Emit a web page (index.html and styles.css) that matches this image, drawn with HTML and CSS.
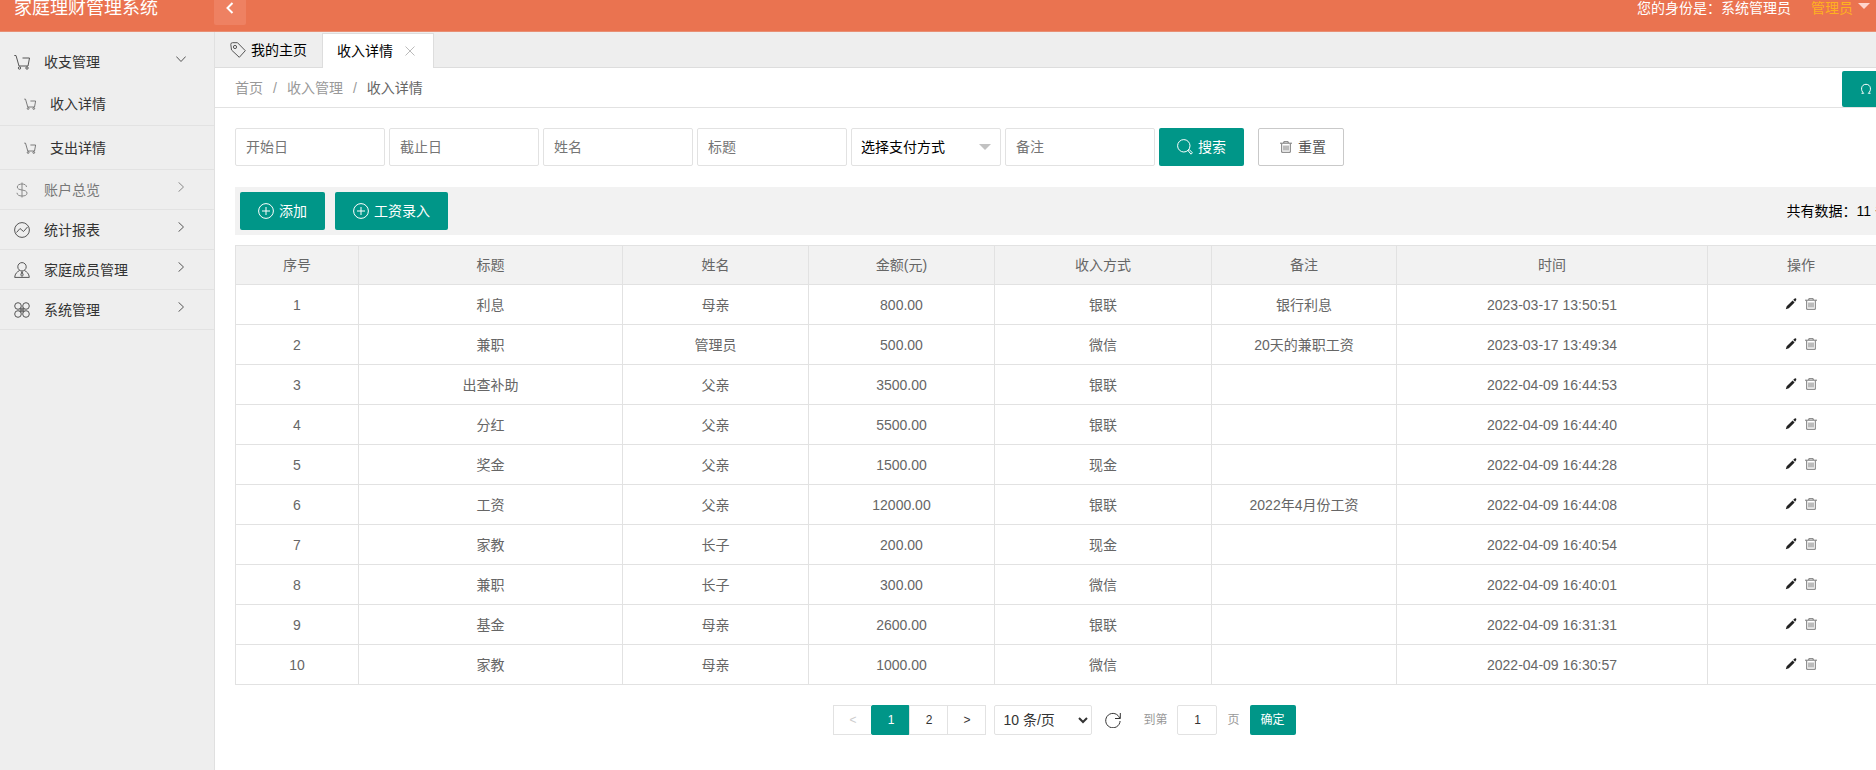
FILE: index.html
```html
<!DOCTYPE html>
<html lang="zh-CN">
<head>
  <meta charset="UTF-8">
  <meta name="viewport" content="width=device-width, initial-scale=1.0">
  <title>家庭理财管理系统</title>
  <link rel="stylesheet" href="styles.css">
</head>
<body>
  <svg class="sprite" aria-hidden="true">
    <symbol id="i-cart" viewBox="0 0 16 16"><path d="M.3 1.500h1.700l3 10.500h9l1.500-8H8.500"/><circle cx="5.500" cy="14" r="1.200"/><circle cx="13" cy="14" r="1.200"/></symbol>
    <symbol id="i-dollar" viewBox="0 0 16 16"><path d="M8 .5v15M12.500 5c0-1.800-1.800-3-4.500-3S3.300 3.200 3.300 5 5 7.500 8 8s5 1.200 5 3.200S11 14 8 14s-5-1.200-5-3.200"/></symbol>
    <symbol id="i-chart" viewBox="0 0 16 16"><circle cx="8" cy="8" r="7.400"/><path d="M2.500 10.500l3.500-4 3.500 3 4-4.500"/></symbol>
    <symbol id="i-user" viewBox="0 0 16 16"><circle cx="8" cy="4.800" r="4.200"/><path d="M5.500 8.500C3 10 1 11.500.700 15.400h14.600C15 11.500 13 10 10.500 8.500M8 9.500l-1.200 3.500L8 14.500 9.200 13z"/></symbol>
    <symbol id="i-clover" viewBox="0 0 16 16"><circle cx="4" cy="4" r="3.300"/><circle cx="12" cy="4" r="3.300"/><circle cx="4" cy="12" r="3.300"/><circle cx="12" cy="12" r="3.300"/><path d="M5.500 7h5M5.500 9h5M7 5.500v5M9 5.500v5"/></symbol>
    <symbol id="i-tag" viewBox="0 0 16 16"><path d="M.8 2.500Q.8.700 2.500.700h5l7.800 8-6 6.600L1.500 8z"/><circle cx="5" cy="5" r="1.600"/></symbol>
    <symbol id="i-plus" viewBox="0 0 16 16"><circle cx="8" cy="8" r="7.400"/><path d="M8 4v8M4 8h8"/></symbol>
    <symbol id="i-search" viewBox="0 0 16 16"><circle cx="6.800" cy="6.800" r="6.200"/><path d="M11 11.500l1.200-1 3.200 3.300-1.400 1.400z"/></symbol>
    <symbol id="i-trash" viewBox="0 0 12 12"><path d="M0 2.200h12M3.800 2V.7h4.400V2M1.700 2.500v8.800h8.600V2.500M4 4.500v5M6 4.500v5M8 4.500v5"/></symbol>
    <symbol id="i-edit" viewBox="0 0 12 12"><path class="solid" d="M.8 11.300l.9-3L7.600 2.400l2 2L3.800 10.300zM8.200 1.800L9.700.500q.7-.4 1.300.1t.2 1.300L10.100 3.700z"/></symbol>
    <symbol id="i-refresh" viewBox="0 0 16 16"><path d="M14.800 6.500A7.200 7.200 0 1 0 15.100 9M15.300 1v5.500H10"/></symbol>
    <symbol id="i-close" viewBox="0 0 10 10"><path d="M.5.500l9 9M9.500.500l-9 9"/></symbol>
    <symbol id="i-right" viewBox="0 0 10 10"><path d="M2.500.300L7.500 5l-5 4.700"/></symbol>
    <symbol id="i-down" viewBox="0 0 10 10"><path d="M.300 2.500L5 7.500l4.700-5"/></symbol>
    <symbol id="i-left" viewBox="0 0 12 12"><path d="M8.500 1L3.500 6l5 5"/></symbol>
    <symbol id="i-reload" viewBox="0 0 12 12"><path d="M1.500 10.300h2.200C.2 7.500 1 1.300 6 1.300s5.800 6.200 2.300 9h2.200"/></symbol>
  </svg>

  <div class="app">
    <header class="topbar">
      <a class="logo" href="#">家庭理财管理系统</a>
      <button class="fold" type="button" aria-label="折叠菜单"><svg><use href="#i-left"/></svg></button>
      <span class="role">您的身份是：系统管理员</span>
      <a class="account" href="#">管理员 <i class="caret"></i></a>
    </header>

    <div class="body">
      <nav class="side">
        <a class="item" href="#"><svg><use href="#i-cart"/></svg>收支管理<svg class="arrow"><use href="#i-down"/></svg></a>
        <a class="item sub" href="#"><svg><use href="#i-cart"/></svg>收入详情</a>
        <a class="item sub" href="#"><svg><use href="#i-cart"/></svg>支出详情</a>
        <a class="item muted" href="#"><svg><use href="#i-dollar"/></svg>账户总览<svg class="arrow"><use href="#i-right"/></svg></a>
        <a class="item" href="#"><svg><use href="#i-chart"/></svg>统计报表<svg class="arrow"><use href="#i-right"/></svg></a>
        <a class="item" href="#"><svg><use href="#i-user"/></svg>家庭成员管理<svg class="arrow"><use href="#i-right"/></svg></a>
        <a class="item" href="#"><svg><use href="#i-clover"/></svg>系统管理<svg class="arrow"><use href="#i-right"/></svg></a>
      </nav>

      <main class="main">
        <div class="tabs">
          <a class="tab" href="#"><svg><use href="#i-tag"/></svg>我的主页</a>
          <a class="tab active" href="#">收入详情<svg class="close"><use href="#i-close"/></svg></a>
        </div>

        <div class="crumbs">
          <a href="#">首页</a><span>/</span><a href="#">收入管理</a><span>/</span><a class="current" href="#">收入详情</a>
          <button class="btn reload" type="button" aria-label="刷新"><svg><use href="#i-reload"/></svg></button>
        </div>

        <div class="content">
          <form class="search">
            <input type="text" placeholder="开始日" aria-label="开始日">
            <input type="text" placeholder="截止日" aria-label="截止日">
            <input type="text" placeholder="姓名" aria-label="姓名">
            <input type="text" placeholder="标题" aria-label="标题">
            <div class="select">
              <select aria-label="支付方式"><option>选择支付方式</option><option>银联</option><option>微信</option><option>现金</option></select>
            </div>
            <input type="text" placeholder="备注" aria-label="备注">
            <button class="btn" type="button"><svg><use href="#i-search"/></svg>搜索</button>
            <button class="btn plain" type="reset"><svg><use href="#i-trash"/></svg>重置</button>
          </form>

          <div class="toolbar">
            <button class="btn" type="button"><svg><use href="#i-plus"/></svg>添加</button>
            <button class="btn" type="button"><svg><use href="#i-plus"/></svg>工资录入</button>
            <span class="total">共有数据：11 条</span>
          </div>

          <table class="list">
            <colgroup>
              <col class="c-no"><col class="c-title"><col class="c-name"><col class="c-name"><col class="c-type"><col class="c-note"><col class="c-time"><col class="c-act">
            </colgroup>
            <thead>
              <tr><th>序号</th><th>标题</th><th>姓名</th><th>金额(元)</th><th>收入方式</th><th>备注</th><th>时间</th><th>操作</th></tr>
            </thead>
            <tbody>
              <tr><td>1</td><td>利息</td><td>母亲</td><td>800.00</td><td>银联</td><td>银行利息</td><td>2023-03-17 13:50:51</td><td><a href="#" title="编辑"><svg><use href="#i-edit"/></svg></a><a href="#" title="删除"><svg><use href="#i-trash"/></svg></a></td></tr>
              <tr><td>2</td><td>兼职</td><td>管理员</td><td>500.00</td><td>微信</td><td>20天的兼职工资</td><td>2023-03-17 13:49:34</td><td><a href="#" title="编辑"><svg><use href="#i-edit"/></svg></a><a href="#" title="删除"><svg><use href="#i-trash"/></svg></a></td></tr>
              <tr><td>3</td><td>出查补助</td><td>父亲</td><td>3500.00</td><td>银联</td><td></td><td>2022-04-09 16:44:53</td><td><a href="#" title="编辑"><svg><use href="#i-edit"/></svg></a><a href="#" title="删除"><svg><use href="#i-trash"/></svg></a></td></tr>
              <tr><td>4</td><td>分红</td><td>父亲</td><td>5500.00</td><td>银联</td><td></td><td>2022-04-09 16:44:40</td><td><a href="#" title="编辑"><svg><use href="#i-edit"/></svg></a><a href="#" title="删除"><svg><use href="#i-trash"/></svg></a></td></tr>
              <tr><td>5</td><td>奖金</td><td>父亲</td><td>1500.00</td><td>现金</td><td></td><td>2022-04-09 16:44:28</td><td><a href="#" title="编辑"><svg><use href="#i-edit"/></svg></a><a href="#" title="删除"><svg><use href="#i-trash"/></svg></a></td></tr>
              <tr><td>6</td><td>工资</td><td>父亲</td><td>12000.00</td><td>银联</td><td>2022年4月份工资</td><td>2022-04-09 16:44:08</td><td><a href="#" title="编辑"><svg><use href="#i-edit"/></svg></a><a href="#" title="删除"><svg><use href="#i-trash"/></svg></a></td></tr>
              <tr><td>7</td><td>家教</td><td>长子</td><td>200.00</td><td>现金</td><td></td><td>2022-04-09 16:40:54</td><td><a href="#" title="编辑"><svg><use href="#i-edit"/></svg></a><a href="#" title="删除"><svg><use href="#i-trash"/></svg></a></td></tr>
              <tr><td>8</td><td>兼职</td><td>长子</td><td>300.00</td><td>微信</td><td></td><td>2022-04-09 16:40:01</td><td><a href="#" title="编辑"><svg><use href="#i-edit"/></svg></a><a href="#" title="删除"><svg><use href="#i-trash"/></svg></a></td></tr>
              <tr><td>9</td><td>基金</td><td>母亲</td><td>2600.00</td><td>银联</td><td></td><td>2022-04-09 16:31:31</td><td><a href="#" title="编辑"><svg><use href="#i-edit"/></svg></a><a href="#" title="删除"><svg><use href="#i-trash"/></svg></a></td></tr>
              <tr><td>10</td><td>家教</td><td>母亲</td><td>1000.00</td><td>微信</td><td></td><td>2022-04-09 16:30:57</td><td><a href="#" title="编辑"><svg><use href="#i-edit"/></svg></a><a href="#" title="删除"><svg><use href="#i-trash"/></svg></a></td></tr>
            </tbody>
          </table>

          <div class="pager">
            <div class="pages">
              <a class="disabled" href="#">&lt;</a><a class="on" href="#">1</a><a href="#">2</a><a href="#">&gt;</a>
            </div>
            <select aria-label="每页条数"><option>10 条/页</option><option>20 条/页</option><option>50 条/页</option></select>
            <button class="refresh" type="button" aria-label="刷新列表"><svg><use href="#i-refresh"/></svg></button>
            <label for="goto">到第</label>
            <input id="goto" type="text" value="1">
            <span>页</span>
            <button class="btn go" type="button">确定</button>
          </div>
        </div>
      </main>
    </div>
  </div>
</body>
</html>
```

FILE: styles.css
```css
* { box-sizing: border-box; }
html { overflow: hidden; }
body {
  margin: 0;
  overflow: hidden;
  background: #fff;
  color: #333;
  font: 14px/20px "Liberation Sans", "Noto Sans CJK SC", sans-serif;
}
a { color: inherit; text-decoration: none; }
input, select, button { font: inherit; margin: 0; }
svg { width: 16px; height: 16px; fill: none; stroke: currentColor; stroke-width: 1; flex: none; }
.solid { fill: currentColor; stroke: none; }
.sprite { position: absolute; width: 0; height: 0; }

/* the admin shell is wider than the window and starts above it */
.app {
  display: flex;
  flex-direction: column;
  min-height: calc(100vh + 14px);
  margin: -14px -38px 0 0;
}

.topbar {
  display: flex;
  align-items: center;
  height: 46px;
  padding: 0 44px 2px 0;
  background: #ea7350;
  border-bottom: 1px solid #e88f74;
  color: #fff;
}
.logo { width: 214px; padding-left: 14px; font-size: 18px; }
.fold {
  display: flex;
  align-items: center;
  justify-content: center;
  width: 32px;
  height: 34px;
  padding: 0;
  border: 0;
  border-radius: 2px;
  background: #ee8162;
  color: #fff;
}
.fold svg { width: 12px; height: 12px; stroke-width: 2; }
.role { margin-left: auto; }
.account { display: flex; align-items: center; margin-left: 20px; color: #ffb01f; }
.caret {
  margin: 0 0 4px 5px;
  border: 6px solid transparent;
  border-top-color: #ffd5cc;
  border-bottom-width: 0;
}

.body { display: flex; flex: 1; }
.side {
  width: 215px;
  flex: none;
  padding-top: 10px;
  background: #eee;
  border-right: 1px solid #e0e0e0;
}
.item {
  display: flex;
  align-items: center;
  height: 40px;
  padding: 0 28px 0 14px;
  border-bottom: 1px solid #e2e2e2;
}
.item svg { margin-right: 14px; color: #555; }
.item:first-child { border-bottom: 0; }
.item .arrow { width: 10px; height: 10px; margin: 0 0 6px auto; }
.item.sub { height: 44px; padding-left: 24px; }
.item.sub svg { width: 12px; height: 12px; }
.item.muted { color: #777; }
.item.muted svg { color: #888; }

.main { flex: 1; min-width: 0; }
.tabs {
  display: flex;
  align-items: flex-end;
  height: 36px;
  background: #eee;
  border-bottom: 1px solid #ddd;
  color: #000;
}
.tab { display: flex; align-items: center; height: 34px; padding: 0 15px; }
.tab svg { margin-right: 5px; color: #555; }
.tab.active {
  height: 35px;
  margin-bottom: -1px;
  padding: 0 18px 0 14px;
  border: 1px solid #ddd;
  border-bottom: 0;
  background: #fff;
}
.tab .close { width: 10px; height: 10px; margin: 0 0 0 12px; color: #bbb; }

.crumbs {
  display: flex;
  align-items: center;
  height: 40px;
  padding: 0 20px;
  border-bottom: 1px solid #e2e2e2;
  color: #999;
}
.crumbs span { margin: 0 10px; }
.crumbs .current { color: #666; }

.btn {
  display: flex;
  align-items: center;
  justify-content: center;
  height: 38px;
  padding: 0 18px;
  border: 0;
  border-radius: 2px;
  background: #009688;
  color: #fff;
}
.btn svg { margin-right: 5px; }
.btn.plain { margin-left: 10px; padding: 0 17px; border: 1px solid #c9c9c9; background: #fff; color: #555; }
.btn.plain svg { width: 12px; height: 12px; margin: 0 6px 0 4px; color: #777; }
.btn.reload { align-self: flex-end; width: 47px; height: 36px; margin-left: auto; margin-right: 5px; padding: 0; }
.btn.reload svg { width: 12px; height: 12px; margin: 0; }

.content { padding: 20px; }
.search { display: flex; gap: 4px; align-items: center; margin-bottom: 21px; }
.search input, .search select {
  width: 150px;
  height: 38px;
  padding: 0 10px;
  border: 1px solid #e2e2e2;
  border-radius: 2px;
  background: #fff;
  color: #000;
}
.search input::placeholder { color: #757575; }
.select { position: relative; }
.search select { display: block; appearance: none; padding: 0 9px; }
.select::after {
  content: "";
  position: absolute;
  right: 10px;
  top: 16px;
  border: 6px solid transparent;
  border-top-color: #c2c2c2;
  border-bottom-width: 0;
  pointer-events: none;
}

.toolbar {
  display: flex;
  align-items: center;
  gap: 10px;
  height: 48px;
  padding: 0 5px;
  margin-bottom: 10px;
  background: #f2f2f2;
}
.total { margin-left: auto; color: #000; }

.list { width: 100%; table-layout: fixed; border-collapse: collapse; color: #666; }
.c-no { width: 123px; }
.c-title { width: 264px; }
.c-name { width: 186px; }
.c-type { width: 217px; }
.c-note { width: 185px; }
.c-time { width: 311px; }
.c-act { width: 187px; }
.list th, .list td {
  height: 40px;
  padding: 0;
  border: 1px solid #e2e2e2;
  text-align: center;
  font-weight: normal;
}
.list th { height: 39px; background: #f2f2f2; }
.list svg { width: 12px; height: 12px; margin: 0 4px; color: #777; }
.list a:first-child svg { color: #222; }

.pager {
  display: flex;
  align-items: center;
  justify-content: center;
  height: 30px;
  margin-top: 20px;
  font-size: 12px;
  color: #999;
}
.pages { display: flex; margin-right: 8px; }
.pages a {
  width: 39px;
  height: 30px;
  margin-left: -1px;
  border: 1px solid #e2e2e2;
  line-height: 28px;
  text-align: center;
  color: #333;
}
.pages a:first-child { margin-left: 0; }
.pages .on { border-color: #009688; border-radius: 2px; background: #009688; color: #fff; }
.pages .disabled { color: #ccc; }
.pager select, .pager input {
  height: 30px;
  border: 1px solid #e2e2e2;
  border-radius: 2px;
  background: #fff;
  color: #333;
}
.pager select { width: 98px; padding: 0 4px; font-size: 14px; }
.pager input { width: 40px; margin: 0 10px; padding: 0; text-align: center; }
.refresh { display: flex; margin: 0 22px 0 13px; padding: 0; border: 0; background: none; color: #333; }
.btn.go { height: 30px; margin-left: 10px; padding: 0 11px; }
```
